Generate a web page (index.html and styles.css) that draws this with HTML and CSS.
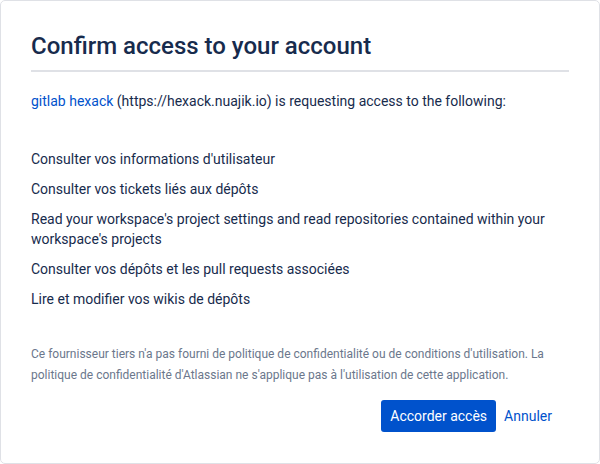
FILE: index.html
```html
<!DOCTYPE html>
<html lang="fr">
<head>
<meta charset="utf-8">
<title>Confirm access</title>
<link rel="stylesheet" href="styles.css">
</head>
<body>
<div class="card">
  <h1 class="title">Confirm access to your account</h1>
  <p class="intro"><a class="link" href="#">gitlab hexack</a> (https://hexack.nuajik.io) is requesting access to the following:</p>
  <ul class="scopes">
    <li>Consulter vos informations d'utilisateur</li>
    <li>Consulter vos tickets liés aux dépôts</li>
    <li>Read your workspace's project settings and read repositories contained within your workspace's projects</li>
    <li>Consulter vos dépôts et les pull requests associées</li>
    <li>Lire et modifier vos wikis de dépôts</li>
  </ul>
  <p class="notice">Ce fournisseur tiers n'a pas fourni de politique de confidentialité ou de conditions d'utilisation. La politique de confidentialité d'Atlassian ne s'applique pas à l'utilisation de cette application.</p>
  <div class="actions">
    <button class="btn-primary" type="button">Accorder accès</button>
    <a class="btn-link" href="#">Annuler</a>
  </div>
</div>
</body>
</html>
```
FILE: styles.css
```css
html, body {
  margin: 0;
  padding: 0;
  background: #ffffff;
}
body {
  font-family: Roboto, "Liberation Sans", sans-serif;
  color: #172b4d;
}
.card {
  box-sizing: border-box;
  width: 600px;
  height: 464px;
  border: 1px solid #dfe1e6;
  border-radius: 5px;
  padding: 27px 30px 30px 30px;
  display: flex;
  flex-direction: column;
}
.title {
  margin: 0;
  font-size: 24px;
  font-weight: 500;
  line-height: 36px;
  color: #172b4d;
  padding-bottom: 6px;
  border-bottom: 2px solid #dfe1e6;
}
.intro {
  margin: 19px 0 0 0;
  font-size: 14px;
  line-height: 20px;
}
.link, .btn-link {
  color: #0052cc;
  text-decoration: none;
}
.scopes {
  list-style: none;
  margin: 38px 0 0 0;
  padding: 0;
  font-size: 14px;
  line-height: 20px;
}
.scopes li {
  margin-bottom: 10px;
}
.notice {
  margin: 25px 0 0 0;
  font-size: 12px;
  line-height: 21px;
  color: #6b778c;
}
.actions {
  margin-top: 14px;
  display: flex;
  justify-content: flex-end;
  align-items: center;
  gap: 8px;
  padding-right: 17px;
}
.btn-primary {
  height: 32px;
  padding: 0 9px;
  border: none;
  border-radius: 3px;
  background: #0052cc;
  color: #ffffff;
  font-family: inherit;
  font-size: 14px;
}
.btn-link {
  font-size: 14px;
  line-height: 32px;
}
```
